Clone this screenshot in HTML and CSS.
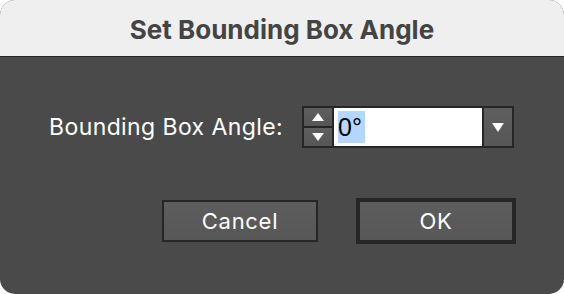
FILE: index.html
```html
<!DOCTYPE html>
<html>
<head>
<meta charset="utf-8">
<link rel="stylesheet" href="styles.css">
</head>
<body>
<div class="dialog">
  <div class="titlebar">Set Bounding Box Angle</div>
  <div class="content">
    <div class="field-row">
      <label class="label">Bounding Box Angle:</label>
      <div class="combo">
        <div class="spinner">
          <div class="spin-btn"><svg width="12" height="8" viewBox="0 0 12 8"><path d="M6 0 L12 8 L0 8 Z" fill="#fff"/></svg></div>
          <div class="spin-btn"><svg width="12" height="8" viewBox="0 0 12 8"><path d="M0 0 L12 0 L6 8 Z" fill="#fff"/></svg></div>
        </div>
        <div class="input"><span class="sel">0°</span></div>
        <div class="drop-btn"><svg width="12" height="9" viewBox="0 0 12 9"><path d="M0 0 L12 0 L6 9 Z" fill="#fff"/></svg></div>
      </div>
    </div>
    <div class="button-row">
      <div class="btn">Cancel</div>
      <div class="btn btn-default">OK</div>
    </div>
  </div>
</div>
</body>
</html>
```

FILE: styles.css
```css
html, body {
  margin: 0;
  padding: 0;
  background: #ffffff;
}
.dialog {
  width: 564px;
  height: 294px;
  border-radius: 15px;
  overflow: hidden;
  background: #4a4a4a;
  display: flex;
  flex-direction: column;
  font-family: "Inter", "Liberation Sans", sans-serif;
}
.titlebar {
  height: 57px;
  box-sizing: border-box;
  background: #efefef;
  border-bottom: 1px solid #262626;
  display: flex;
  align-items: center;
  justify-content: center;
  font-family: "Inter", "Roboto", sans-serif;
  font-weight: 700;
  font-size: 26px;
  color: #444444;
  padding-top: 2px;
}
.content {
  display: flex;
  flex-direction: column;
  padding: 49px 48px 0 49px;
}
.field-row {
  display: flex;
  align-items: center;
  gap: 20px;
}
.label {
  color: #ffffff;
  font-size: 23px;
  letter-spacing: 0.4px;
  width: 233px;
  white-space: nowrap;
}
.combo {
  display: flex;
  width: 212px;
  height: 42px;
  box-sizing: border-box;
  background: #262626;
  padding: 2px;
  gap: 2px;
}
.spinner {
  width: 28px;
  display: flex;
  flex-direction: column;
  gap: 2px;
}
.spin-btn {
  flex: 1;
  background: linear-gradient(#5f5f5f, #565656);
  display: flex;
  align-items: center;
  justify-content: center;
}
.input {
  flex: 1;
  background: #ffffff;
  display: flex;
  align-items: center;
  padding-left: 4px;
}
.sel {
  background: #b3d7ff;
  color: #000000;
  font-family: "Liberation Sans", sans-serif;
  font-size: 25px;
  line-height: 32px;
  padding-right: 3px;
}
.drop-btn {
  width: 28px;
  background: linear-gradient(#5f5f5f, #565656);
  display: flex;
  align-items: center;
  justify-content: center;
}
.button-row {
  display: flex;
  justify-content: flex-end;
  align-items: center;
  gap: 38px;
  margin-top: 50px;
}
.btn {
  width: 156px;
  height: 42px;
  box-sizing: border-box;
  border: 2px solid #262626;
  background: linear-gradient(#5d5d5d, #575757);
  color: #ffffff;
  font-size: 22px;
  letter-spacing: 0.7px;
  display: flex;
  align-items: center;
  justify-content: center;
}
.btn-default {
  width: 160px;
  height: 46px;
  border-width: 4px;
}
```
